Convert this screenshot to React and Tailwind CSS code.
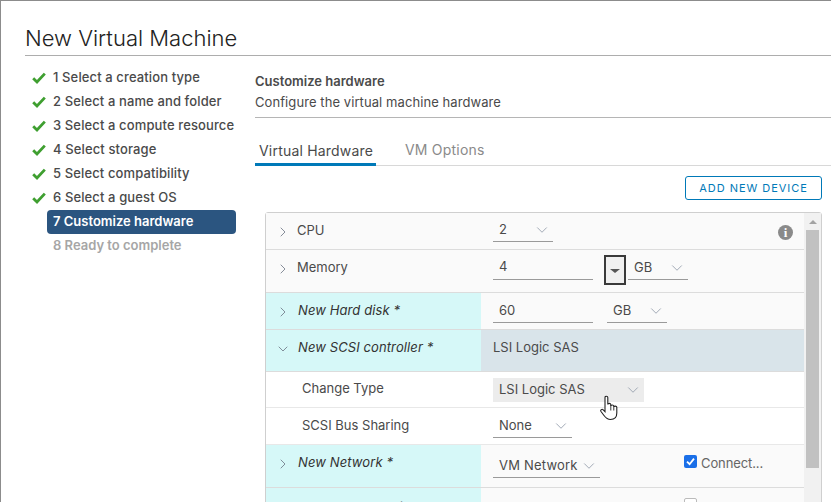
import React from 'react';
import { ChevronDown, ChevronRight } from 'lucide-react';

const steps = [
  '1 Select a creation type',
  '2 Select a name and folder',
  '3 Select a compute resource',
  '4 Select storage',
  '5 Select compatibility',
  '6 Select a guest OS',
];

function Check() {
  return (
    <svg width="14" height="12" viewBox="0 0 14 12" className="shrink-0">
      <path d="M1.2 6.2 L5 10 L12.8 1.6" fill="none" stroke="#3f9f30" strokeWidth="2.8" />
    </svg>
  );
}

function Select({ value, width, textClass = '' }) {
  return (
    <div className={`flex items-center justify-between h-[24px] border-b border-[#9a9a9a] pl-[6px] pr-[2px] ${width}`}>
      <span className={textClass}>{value}</span>
      <ChevronDown size={18} strokeWidth={1.2} className="text-gray-400" />
    </div>
  );
}

function Row({ title, isNew, open, h, children, titleClass = 'pt-[8px]', valueClass = '' }) {
  return (
    <div className={`flex border-b border-[#dcdcdc] bg-[#fafafa] ${h}`}>
      <div className={`w-[215px] shrink-0 flex items-start pl-[9px] ${titleClass} ${isNew ? 'bg-[#d6f8f8]' : ''}`}>
        {open ? (
          <ChevronDown size={16} strokeWidth={1.2} className="text-gray-500 mt-[3px] mr-[6px]" />
        ) : (
          <ChevronRight size={16} strokeWidth={1.2} className="text-gray-500 mt-[3px] mr-[6px]" />
        )}
        <span className={isNew ? 'ml-px italic text-[#333] tracking-[0.1px]' : ''}>{title}</span>
      </div>
      <div className={`flex-1 flex ${valueClass}`}>{children}</div>
    </div>
  );
}

function SubRow({ title, children, h, titleClass = 'pt-[8px]' }) {
  return (
    <div className={`flex bg-white border-b border-[#e8e8e8] ${h}`}>
      <div className={`w-[215px] shrink-0 pl-[36px] ${titleClass}`}>{title}</div>
      <div className="flex-1 flex">{children}</div>
    </div>
  );
}

export default function App() {
  return (
    <div className="relative w-[831px] h-[502px] overflow-hidden bg-white border-t border-l border-[#8c8c8c] text-[13px] text-[#4a4a4a] font-['Inter','Liberation_Sans',sans-serif]">
      <div className="ml-[24px] h-[55px] pt-[23px] border-b border-[#adadad]">
        <h1 className="text-[22px] leading-[28px] font-light text-[#222]">New Virtual Machine</h1>
      </div>

      <div className="flex">
        <div className="w-[254px] shrink-0 pt-[10px] pl-[31px] pr-[19px]">
          {steps.map((s) => (
            <div key={s} className="h-[24px] flex items-center gap-[7px] font-medium text-[#4a4a4a] tracking-[0.12px]">
              <Check />
              <span>{s}</span>
            </div>
          ))}
          <div className="ml-[15px] h-[24px] flex items-center pl-[6px] rounded-[4px] bg-[#2b5580] text-white font-semibold">
            7 Customize hardware
          </div>
          <div className="ml-[21px] h-[24px] flex items-center font-semibold text-[#a6a6a6]">8 Ready to complete</div>
        </div>

        <div className="flex-1 min-w-0 pt-[16px]">
          <div className="h-[46px] border-b border-[#b5b5b5]">
            <div className="font-semibold text-[#4a4a4a] leading-[18px]">Customize hardware</div>
            <div className="mt-[3px] leading-[18px] tracking-[0.08px]">Configure the virtual machine hardware</div>
          </div>

          <div className="flex h-[48px] items-end border-b border-[#d8d8d8] text-[14px] tracking-[0.2px]">
            <div className="h-[30px] pt-[4px] px-[4px] border-b-[3px] -mb-px border-[#0079b8] text-[#4a4a4a] w-[121px] whitespace-nowrap">Virtual Hardware</div>
            <div className="h-[30px] pt-[4px] ml-[29px] text-[#8a8a8a] whitespace-nowrap">VM Options</div>
          </div>

          <div className="flex justify-end pr-[9px] pt-[10px]">
            <button className="h-[24px] w-[137px] rounded-[3px] border border-[#0079b8] text-[#0079b8] text-[11px] tracking-[0.95px]">
              ADD NEW DEVICE
            </button>
          </div>

          <div className="ml-[10px] mr-[9px] mt-[12px] flex border border-[#cfcfcf] rounded-t-[3px] bg-[#fafafa]">
            <div className="flex-1 min-w-0">
              <Row title="CPU" h="h-[37px]" valueClass="relative">
                <div className="pl-[12px] pt-[5px]">
                  <Select value="2" width="w-[60px]" />
                </div>
                <span className="absolute right-[11px] top-[12px] w-[15px] h-[15px] rounded-full bg-[#8a8a8a] text-white text-[13px] leading-[15px] text-center font-bold font-['Liberation_Serif',serif]">
                  i
                </span>
              </Row>
              <Row title="Memory" h="h-[43px]">
                <div className="pl-[12px] pt-[4px] flex items-start">
                  <div className="w-[100px] h-[26px] border-b border-[#9a9a9a] pl-[6px] pt-[3px]">4</div>
                  <div className="ml-[11px] mt-[1px] w-[22px] h-[30px] border-2 border-[#3a3a3a] bg-[#f0f0f0] flex items-center justify-center">
                    <span className="mt-[2px] w-0 h-0 border-x-[5px] border-x-transparent border-t-[4px] border-t-[#555]" />
                  </div>
                  <div className="ml-[2px] mt-[2px]">
                    <Select value="GB" width="w-[60px]" />
                  </div>
                </div>
              </Row>
              <Row title="New Hard disk *" isNew h="h-[37px]">
                <div className="pl-[12px] pt-[4px] flex items-start">
                  <div className="w-[100px] h-[26px] border-b border-[#9a9a9a] pl-[6px] pt-[4px]">60</div>
                  <div className="ml-[14px] mt-[2px]">
                    <Select value="GB" width="w-[60px]" />
                  </div>
                </div>
              </Row>
              <Row title="New SCSI controller *" isNew open h="h-[42px]" valueClass="bg-[#d9e4ea]">
                <div className="pl-[12px] pt-[8px]">LSI Logic SAS</div>
              </Row>
              <SubRow title="Change Type" h="h-[36px]" titleClass="pt-[7px]">
                <div className="pl-[12px] pt-[6px]">
                  <div className="w-[151px] h-[24px] bg-[#ececec] flex items-center justify-between pl-[6px] pr-[2px]">
                    <span>LSI Logic SAS</span>
                    <ChevronDown size={18} strokeWidth={1.2} className="text-gray-400" />
                  </div>
                </div>
              </SubRow>
              <SubRow title="SCSI Bus Sharing" h="h-[37px]">
                <div className="pl-[12px] pt-[6px]">
                  <Select value="None" width="w-[79px]" />
                </div>
              </SubRow>
              <Row title="New Network *" isNew h="h-[43px]" valueClass="relative">
                <div className="pl-[12px] pt-[9px]">
                  <Select value="VM Network" width="w-[107px]" textClass="tracking-[0.2px]" />
                </div>
                <div className="absolute left-[203px] top-[9px] flex items-center gap-[4px]">
                  <span className="mb-[4px] w-[13px] h-[13px] rounded-[2px] bg-[#1a6fe8] flex items-center justify-center">
                    <svg width="9" height="9" viewBox="0 0 9 9">
                      <path d="M1 4.6 L3.6 7.2 L8 1.6" fill="none" stroke="#fff" strokeWidth="1.8" />
                    </svg>
                  </span>
                  <span className="text-[#666] tracking-[-0.1px]">Connect...</span>
                </div>
              </Row>
              <Row title="New CD/DVD Drive *" isNew h="h-[43px]" titleClass="pt-[10px]" valueClass="relative">
                <div className="absolute left-[203px] top-[10px] w-[13px] h-[13px] rounded-[2px] border border-[#bbb] bg-white" />
              </Row>
            </div>

            <div className="w-[17px] shrink-0 bg-[#f1f1f1] flex flex-col items-center">
              <div className="h-[17px] flex items-center justify-center">
                <span className="w-0 h-0 border-x-[4px] border-x-transparent border-b-[4px] border-b-[#a3a3a3]" />
              </div>
              <div className="w-[13px] h-[238px] bg-[#c1c1c1]" />
            </div>
          </div>
        </div>
      </div>

      {/* mouse pointer over the Change Type select */}
      <svg width="18" height="26" viewBox="0 0 18 26" className="absolute left-[599px] top-[394px]">
        <path
          d="M5 2.5 C5 0.8 7.8 0.8 7.8 2.5 L7.8 9.5 C8 8 10.6 8 10.8 9.5 L10.8 11 C11 9.6 13.6 9.6 13.8 11 L13.8 12 C14 10.8 16.6 10.8 16.8 12.2 L16.8 18 C16.8 22 14.6 24.5 10.5 24.5 C7 24.5 5.5 22.5 4 20.5 L1 16.5 C0 15 2 13.6 3.2 14.8 L5 16.6 Z"
          fill="#fff"
          stroke="#222"
          strokeWidth="1.1"
        />
        <path d="M10.8 10.5 V15.5 M13.8 11.5 V15.5" fill="none" stroke="#222" strokeWidth="0.9" />
      </svg>
    </div>
  );
}
